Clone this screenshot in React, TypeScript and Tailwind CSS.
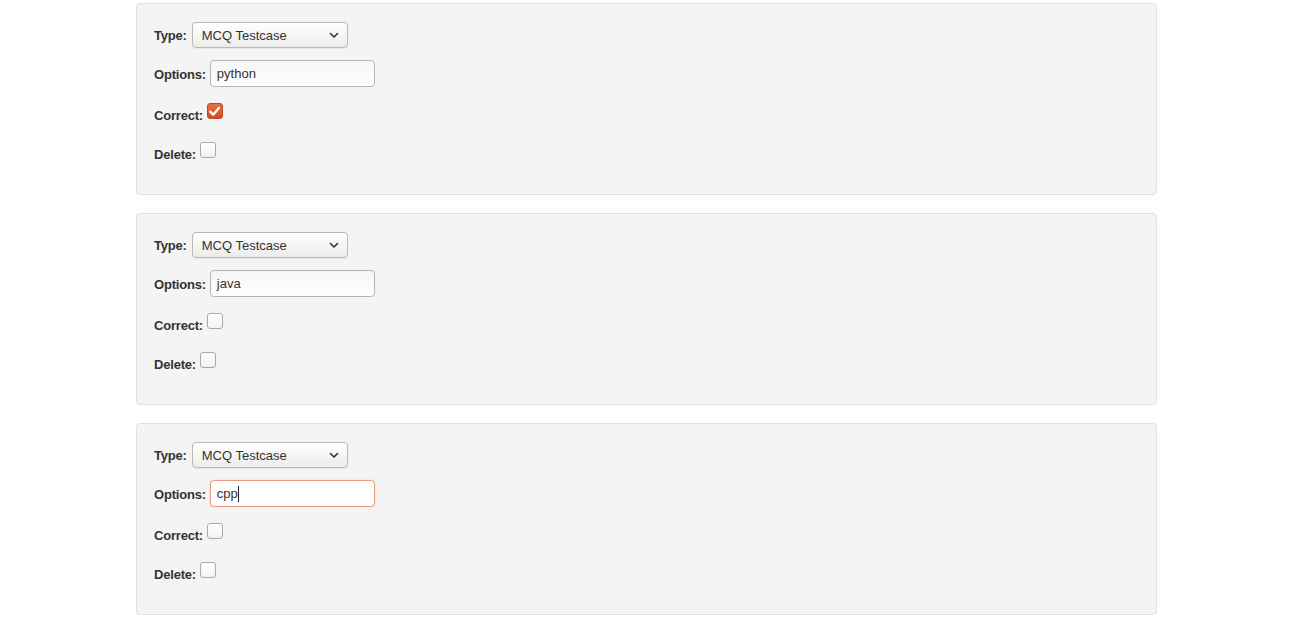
import { useState } from 'react';

interface TestcaseItem {
  id: number;
  option: string;
  correct: boolean;
  focused?: boolean;
}

const initialItems: TestcaseItem[] = [
  { id: 1, option: 'python', correct: true },
  { id: 2, option: 'java', correct: false },
  { id: 3, option: 'cpp', correct: false, focused: true },
];

function Checkbox({ checked, onChange }: { checked: boolean; onChange: () => void }) {
  if (checked) {
    return (
      <button
        onClick={onChange}
        className="w-[16px] h-[16px] rounded-[3px] border border-[#b9481f] bg-gradient-to-b from-[#e8703f] to-[#cc4f20] flex items-center justify-center shrink-0"
      >
        <svg width="13" height="13" viewBox="0 0 12 12" fill="none">
          <path d="M2 6.2L4.8 9L10 2.8" stroke="#fff" strokeWidth="2.2" strokeLinecap="round" strokeLinejoin="round" />
        </svg>
      </button>
    );
  }
  return (
    <button
      onClick={onChange}
      className="w-[16px] h-[16px] rounded-[3px] border border-[#a9a9a9] bg-gradient-to-b from-[#ffffff] to-[#f2f2f2] shrink-0"
    />
  );
}

function TestcaseCard({ item, onToggle }: { item: TestcaseItem; onToggle: () => void }) {
  const [deleted, setDeleted] = useState(false);

  return (
    <div className="h-[192px] mb-[18px] bg-[#f4f4f4] border border-[#e1e1e1] rounded-[4px] pl-[17px] pt-[18px]">
      {/* Type */}
      <div className="flex items-center h-[26px]">
        <span className="font-bold text-[13px] tracking-[-0.2px] text-[#333] mt-[1px]">Type:</span>
        <div className="ml-[5px] w-[156px] h-[26px] rounded-[4px] border border-[#b8b8b8] bg-gradient-to-b from-[#ffffff] to-[#ececec] flex items-center justify-between pl-[9px] pr-[8px] shadow-[0_1px_1px_rgba(0,0,0,0.06)]">
          <span className="text-[13px] text-[#333] mt-[1px]">MCQ Testcase</span>
          <svg width="10" height="7" viewBox="0 0 10 7" fill="none">
            <path d="M1.5 1.5L5 5L8.5 1.5" stroke="#333" strokeWidth="1.6" strokeLinecap="round" strokeLinejoin="round" />
          </svg>
        </div>
      </div>

      {/* Options */}
      <div className="flex items-center h-[27px] mt-[12px]">
        <span className="font-bold text-[13px] tracking-[-0.2px] text-[#333] mt-[2px]">Options:</span>
        <div
          className={
            item.focused
              ? 'ml-[4px] w-[165px] h-[27px] rounded-[4px] border border-[#ea9a7c] bg-white flex items-center pl-[6px] shadow-[0_0_2px_rgba(232,112,63,0.25)]'
              : 'ml-[4px] w-[165px] h-[27px] rounded-[4px] border border-[#b5b5b5] bg-gradient-to-b from-[#f6f6f6] to-[#ffffff] flex items-center pl-[6px]'
          }
        >
          <span className="text-[13px] text-[#333] mt-[1px]">{item.option}</span>
          {item.focused && <span className="w-px h-[16px] bg-[#222] mt-[1px]" />}
        </div>
      </div>

      {/* Correct */}
      <div className="flex items-start mt-[16px]">
        <span className="font-bold text-[13px] tracking-[-0.2px] leading-[15px] text-[#333] mt-[5px] mr-[4px]">Correct:</span>
        <Checkbox checked={item.correct} onChange={onToggle} />
      </div>

      {/* Delete */}
      <div className="flex items-start mt-[19px]">
        <span className="font-bold text-[13px] tracking-[-0.2px] leading-[15px] text-[#333] mt-[5px] mr-[4px]">Delete:</span>
        <Checkbox checked={deleted} onChange={() => setDeleted(d => !d)} />
      </div>
    </div>
  );
}

export default function App() {
  const [items, setItems] = useState(initialItems);

  return (
    <div className="w-[1296px] h-[621px] bg-white overflow-hidden pt-[3px] font-['Liberation_Sans',Arial,sans-serif]">
      <div className="ml-[136px] w-[1021px]">
        {items.map(item => (
          <TestcaseCard
            key={item.id}
            item={item}
            onToggle={() =>
              setItems(prev => prev.map(i => (i.id === item.id ? { ...i, correct: !i.correct } : i)))
            }
          />
        ))}
      </div>
    </div>
  );
}
